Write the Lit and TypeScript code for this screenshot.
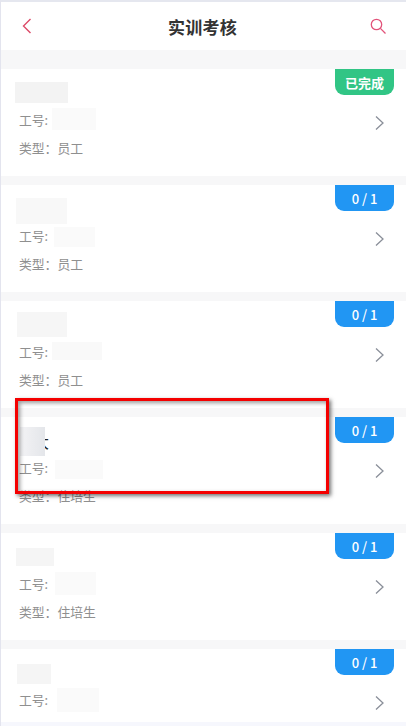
import { LitElement, html, css, svg } from "lit";
import { customElement } from "lit/decorators.js";

interface Smudge { x: number; y: number; w: number; h: number; c: string; }
interface Row {
  badge: string; done?: boolean; name?: string; type?: string;
  nameBlur: Smudge; idBlur: Smudge;
}

const rows: Row[] = [
  { badge: "已完成", done: true, type: "员工",
    nameBlur: { x: 14, y: 13, w: 53, h: 21, c: "#f3f3f3" }, idBlur: { x: 51, y: 39, w: 44, h: 22, c: "#fafafa" } },
  { badge: "0 / 1", type: "员工",
    nameBlur: { x: 15, y: 13, w: 51, h: 26, c: "#f8f8f8" }, idBlur: { x: 53, y: 42, w: 41, h: 20, c: "#fafafa" } },
  { badge: "0 / 1", type: "员工",
    nameBlur: { x: 16, y: 11, w: 50, h: 25, c: "#f6f6f6" }, idBlur: { x: 51, y: 41, w: 50, h: 18, c: "#f9f9f9" } },
  { badge: "0 / 1", type: "住培生", name: "大",
    nameBlur: { x: 19, y: 10, w: 25, h: 29, c: "linear-gradient(90deg, #f3f3f5, #e4e6ea)" }, idBlur: { x: 54, y: 43, w: 48, h: 19, c: "#fafafa" } },
  { badge: "0 / 1", type: "住培生",
    nameBlur: { x: 15, y: 15, w: 38, h: 18, c: "#f5f5f5" }, idBlur: { x: 54, y: 39, w: 41, h: 23, c: "#fafafa" } },
  { badge: "0 / 1",
    nameBlur: { x: 16, y: 15, w: 34, h: 20, c: "#f5f5f5" }, idBlur: { x: 56, y: 39, w: 42, h: 24, c: "#fafafa" } },
];

const smudgeStyle = (s: Smudge) =>
  `left:${s.x}px;top:${s.y}px;width:${s.w}px;height:${s.h}px;background:${s.c}`;

@customElement("app-root")
export class AppRoot extends LitElement {
  static styles = css`
    :host {
      display: block;
      width: 406px;
      height: 726px;
      overflow: hidden;
      position: relative;
      box-sizing: border-box;
      background: #f7f7f8;
      border-top: 2px solid #e5e7ef;
      border-left: 1px solid #e3e4ee;
      font-family: "Noto Sans CJK SC", "Noto Sans", sans-serif;
    }
    .header {
      height: 48px;
      background: #fff;
      display: flex;
      align-items: center;
      justify-content: space-between;
      padding: 0 19px 0 21px;
      margin-bottom: 19px;
    }
    .header svg { display: block; }
    .title {
      font-size: 17px;
      font-weight: 700;
      color: #333;
      letter-spacing: 0.2px;
      margin-left: 3px;
    }
    .list {
      display: flex;
      flex-direction: column;
      gap: 9px;
    }
    .card {
      position: relative;
      height: 107px;
      background: #fff;
      box-sizing: border-box;
      padding: 12px 11px 0 17px;
      overflow: hidden;
      flex: none;
    }
    .card.short { height: 73px; }
    .foot {
      height: 4px;
      margin-top: -9px;
      background: #f6f7fd;
    }
    .name {
      height: 24px;
      line-height: 24px;
      font-size: 16px;
      color: #222;
      text-indent: 15px;
    }
    .meta {
      height: 28px;
      margin-left: 1px;
      line-height: 28px;
      font-size: 12.8px;
      color: #8f8f8f;
    }
    .meta.first { margin-top: 1px; }
    .badge {
      position: absolute;
      top: 0;
      left: 334px;
      width: 59px;
      height: 26px;
      border-radius: 0 0 9px 9px;
      display: flex;
      align-items: center;
      justify-content: center;
      color: #fff;
      font-size: 13px;
      font-weight: 500;
      background: #2196f3;
    }
    .badge.done { background: #31c585; font-weight: 700; }
    .chevron {
      position: absolute;
      left: 373px;
      top: 46px;
      display: block;
    }
    .smudge {
      position: absolute;
      filter: blur(0.5px);
    }
    .mark {
      position: absolute;
      left: 14px;
      top: 396px;
      width: 314px;
      height: 96px;
      box-sizing: border-box;
      border: 3px solid #f40000;
      box-shadow: 2px 2px 4px rgba(0, 0, 0, 0.55), inset 2px 2px 4px rgba(0, 0, 0, 0.4);
    }
  `;

  render() {
    return html`
      <div class="header">
        <svg width="10" height="16" viewBox="0 0 10 16" fill="none">
          <path d="M8.5 1 L1.5 8 L8.5 15" stroke="#dc4a68" stroke-width="1.4" />
        </svg>
        <div class="title">实训考核</div>
        <svg width="17" height="17" viewBox="0 0 17 17" fill="none">
          <circle cx="6.5" cy="6.5" r="5.2" stroke="#e2537a" stroke-width="1.3" />
          <path d="M10.4 10.4 L15.5 15.5" stroke="#e2537a" stroke-width="1.3" />
        </svg>
      </div>
      <div class="list">
        ${rows.map(
          (r) => html`
            <div class="card ${r.type ? "" : "short"}">
              <div class="name">${r.name ?? ""}</div>
              <div class="meta first">工号:</div>
              ${r.type ? html`<div class="meta">类型：${r.type}</div>` : ""}
              <div class="smudge" style=${smudgeStyle(r.nameBlur)}></div>
              <div class="smudge" style=${smudgeStyle(r.idBlur)}></div>
              <div class="badge ${r.done ? "done" : ""}">${r.badge}</div>
              ${svg`<svg class="chevron" width="12" height="16" viewBox="0 0 12 16" fill="none">
                <path d="M2 1.5 L9 8 L2 14.5" stroke="#8a8f99" stroke-width="1.3" />
              </svg>`}
            </div>
          `
        )}
        <div class="foot"></div>
      </div>
      <div class="mark"></div>
    `;
  }
}
